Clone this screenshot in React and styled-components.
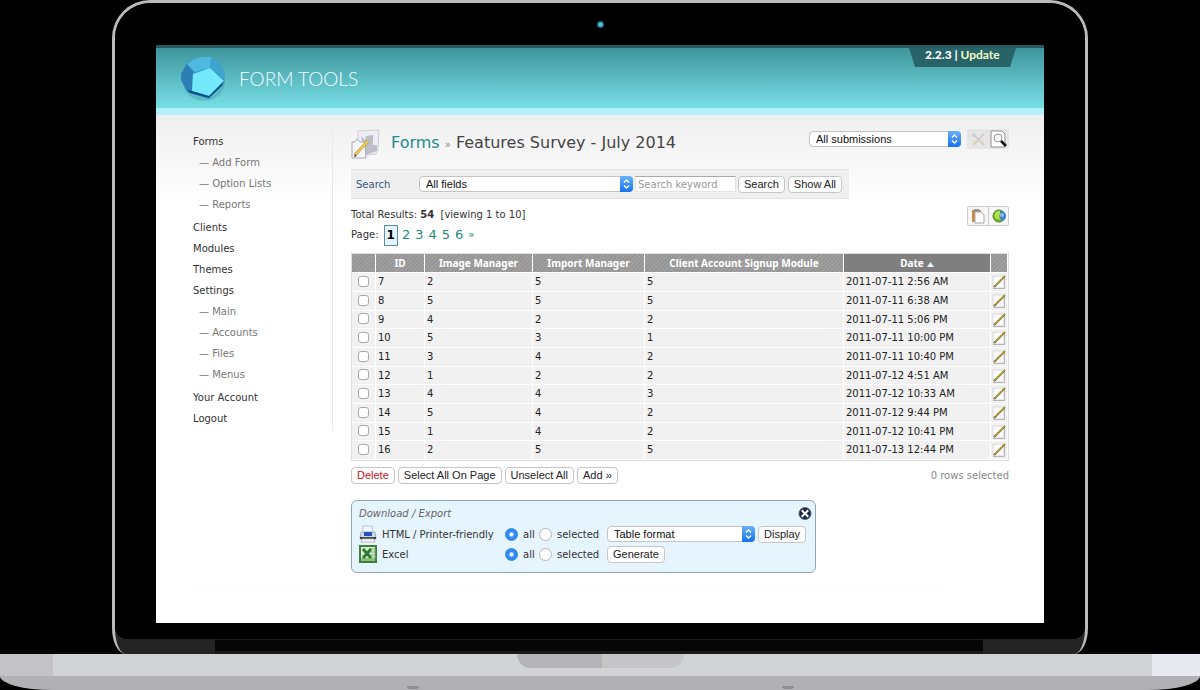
import React, { useState } from 'react';
import styled, { createGlobalStyle, css } from 'styled-components';

const sans = '"DejaVu Sans", Verdana, sans-serif';
const control = '"Liberation Sans", Arial, sans-serif';

const GlobalStyle = createGlobalStyle`
  * {
    box-sizing: border-box;
  }

  body {
    margin: 0;
    background: #000;
    color: #333;
    font-family: ${sans};
    font-size: 10px;
  }

  a {
    text-decoration: none;
  }
`;

/* ---------- laptop ---------- */

const Laptop = styled.div`
  display: flex;
  flex-direction: column;
  min-height: 100vh;
  overflow: hidden;
`;

const Lid = styled.div`
  flex: 1;
  display: flex;
  flex-direction: column;
  margin: 0 112px;
  border: 3px solid #b9babc;
  border-bottom: none;
  border-radius: 38px 38px 14px 14px / 38px 38px 26px 26px;
  background: #242424;
  overflow: hidden;
`;

const Bezel = styled.div`
  flex: 1;
  display: flex;
  flex-direction: column;
  padding: 0 41px 16px;
  border-radius: 0 0 12px 12px;
  background: #000;
`;

const CameraRow = styled.div`
  display: flex;
  justify-content: center;
  align-items: center;
  height: 42px;
`;

const Camera = styled.span`
  width: 7px;
  height: 7px;
  border-radius: 50%;
  background: radial-gradient(#5fc6e0 20%, #1b6f86 60%, #0a2a33);
`;

const Hinge = styled.div`
  height: 15px;
  margin: 0 102px 0 100px;
  border-top: 1px solid #1c1c1c;
  border-bottom: 3px solid #1a1a1a;
  background: #060606;
`;

const Deck = styled.div`
  display: flex;
  justify-content: space-between;
  height: 22px;
  background: #d1d3d4;
`;

const DeckEnd = styled.div`
  width: ${({ $width }) => $width};
  background: ${({ $color }) => $color};
`;

const Notch = styled.div`
  width: 167px;
  height: 14px;
  margin-right: 4px;
  border-radius: 0 0 14px 14px;
  background: linear-gradient(90deg, #b4b3b7 51%, #c5c5c7 51%);
`;

const Underside = styled.div`
  display: flex;
  justify-content: space-around;
  align-items: flex-end;
  height: 14px;
  padding: 0 225px;
  border-radius: 0 0 52px 52px / 0 0 14px 14px;
  background: #b1b0b5;
`;

const Foot = styled.span`
  width: 12px;
  height: 3px;
  margin-bottom: 1px;
  border-radius: 0 0 6px 6px;
  background: #8f8e93;
`;

/* ---------- application ---------- */

const Screen = styled.div`
  flex: 1;
  background: #fff linear-gradient(#efefef, #fff) 0 70px / 100% 90px no-repeat;
`;

const Header = styled.header`
  display: flex;
  justify-content: space-between;
  align-items: flex-start;
  height: 70px;
  padding: 0 28px 0 23px;
  border-top: 3px solid #28595d;
  border-bottom: 7px solid #b5f1fa;
  background: linear-gradient(#3f959c, #78dfe7);
`;

const Brand = styled.a`
  display: flex;
  align-items: center;
  gap: 12px;
  padding-top: 6px;
  color: #f4feff;
  font-family: Lato, sans-serif;
  font-size: 19px;
  font-weight: 300;
`;

const Version = styled.div`
  width: 107px;
  padding: 0 0 5px 16px;
  background: #28636a;
  clip-path: polygon(0 0, 100% 0, calc(100% - 6px) 100%, 6px 100%);
  color: #fff;
  font-family: Lato, sans-serif;
  font-size: 12px;
  font-weight: 900;
  line-height: 14px;
  white-space: nowrap;

  a {
    color: #f3fbc4;
    font-weight: 700;
  }
`;

const Body = styled.div`
  display: flex;
  padding: 12px 35px 0 37px;
`;

const Sidebar = styled.nav`
  flex: none;
  width: 140px;
  height: 304px;
  padding-top: 4px;
  border-right: 1px solid #e9e9e9;
`;

const Menu = styled.ul`
  margin: 0;
  padding: 0;
  list-style: none;
  line-height: 21px;

  a {
    color: #333;
  }
`;

const SubMenu = styled(Menu)`
  padding: 0 0 2px 6px;

  a {
    color: #777;
  }
`;

const Main = styled.main`
  flex: 1;
  min-width: 0;
  padding-left: 18px;
`;

const TitleRow = styled.div`
  display: flex;
  align-items: flex-start;
  height: 42px;
  padding-top: 2px;
`;

const Title = styled.h1`
  flex: 1;
  margin: 0 0 0 10px;
  color: #444;
  font-size: 16px;
  font-weight: 400;
  line-height: 28px;
  white-space: nowrap;

  a {
    color: #258a8a;
  }

  small {
    color: #888;
    font-size: 10px;
  }
`;

const ViewTools = styled.div`
  display: flex;
  align-items: center;
  gap: 6px;
`;

const SelectBox = styled.span`
  position: relative;
  display: flex;
  flex: none;
  width: ${({ $width }) => $width};

  select {
    width: 100%;
    height: 16px;
    padding: 0 18px 0 6px;
    border: 1px solid #c4c4c4;
    border-radius: 4px;
    appearance: none;
    background: #fff;
    color: #111;
    font-family: ${control};
    font-size: 11px;
    line-height: 14px;
  }

  svg {
    position: absolute;
    top: 0;
    right: 0;
    pointer-events: none;
  }
`;

const Button = styled.button`
  flex: none;
  height: 17px;
  padding: 0 5px;
  border: 1px solid #c6c6c6;
  border-radius: 4px;
  background: #fff;
  color: ${({ $danger }) => ($danger ? '#c4161c' : '#222')};
  font-family: ${control};
  font-size: 11px;
  line-height: 15px;
  white-space: nowrap;
`;

const IconButton = styled.button`
  display: flex;
  justify-content: center;
  align-items: center;
  width: 20px;
  height: 18px;
  padding: 0;
  border: none;
  background: none;
  opacity: ${({ disabled }) => (disabled ? 0.35 : 1)};
`;

const IconGroup = styled.div`
  display: flex;
  flex: none;
  align-self: flex-start;
  ${({ $flat }) =>
    $flat
      ? css`
          padding: 1px;
          background: #e6e6e6;
        `
      : css`
          border: 1px solid #ccc;
          border-radius: 2px;
          background: #f6f6f6;

          button + button {
            border-left: 1px solid #ccc;
          }
        `}
`;

const SearchForm = styled.form`
  display: flex;
  align-items: center;
  width: 498px;
  height: 30px;
  padding: 0 5px;
  border: 1px solid #e2e2e2;
  border-width: 1px 0;
  background: #efefef;

  label {
    flex: none;
    width: 63px;
    color: #36587c;
  }

  input {
    flex: none;
    width: 101px;
    height: 16px;
    margin: 0 2px;
    padding: 0 2px;
    border: 1px solid #e4e4e4;
    border-top-color: #aaa;
    background: #fff;
    font-family: ${sans};
    font-size: 10px;
  }

  input::placeholder {
    color: #999;
  }

  button + button {
    margin-left: 3px;
  }
`;

const Summary = styled.div`
  display: flex;
  justify-content: space-between;
  height: 54px;
  padding-top: 7px;
  line-height: 18px;

  p {
    margin: 0;
  }
`;

const Pages = styled.div`
  display: flex;
  align-items: center;
  gap: 5px;
  height: 22px;

  a {
    color: #258a7c;
    font-size: 13px;
  }

  a:last-child {
    font-size: 10px;
  }

  strong {
    margin-right: -1px;
    padding: 0 2px;
    border: 1px solid #5d8ca8;
    background: #e6f4fd;
    color: #000;
    font-size: 12px;
    line-height: 19px;
  }
`;

const Table = styled.table`
  width: 100%;
  border: 1px solid #ddd;
  border-collapse: separate;
  border-spacing: 0;
  table-layout: fixed;
`;

const Th = styled.th`
  height: 19px;
  padding: 0;
  border: solid #fff;
  border-width: 0 1px 1px 0;
  background: ${({ $sorted }) =>
    $sorted ? '#7f7f7f' : 'repeating-linear-gradient(135deg, #949494 0 1px, #a1a1a1 2px 3px)'};
  color: #fff;
  font-family: "Noto Sans", sans-serif;
  font-size: 10px;
  line-height: 12px;

  svg {
    margin-left: 3px;
  }
`;

const Tr = styled.tr`
  height: 19px;

  &:nth-child(3n) {
    height: 18px;
  }
`;

const Td = styled.td`
  padding: 0 0 0 2px;
  border: solid #fff;
  border-width: 0 1px 1px 0;
  background: #f1f1f1;
  color: #222;
  line-height: 12px;

  &:last-child {
    padding: 0;
  }

  button {
    width: 16px;
    height: 16px;
  }
`;

const Checkbox = styled.input`
  display: block;
  width: 11px;
  height: 11px;
  margin: 0 0 2px 4px;
  border: 1px solid #aaa;
  border-radius: 3px;
  appearance: none;
  background: #fff;

  &:checked {
    background: #3b99fc;
  }
`;

const Actions = styled.div`
  display: flex;
  align-items: center;
  gap: 3px;
  padding-top: 6px;
`;

const Selected = styled.span`
  margin-left: auto;
  color: #888;
`;

const Export = styled.section`
  width: 465px;
  height: 73px;
  margin-top: 16px;
  padding: 3px 7px 0;
  border: 1px solid #8fa5b3;
  border-radius: 6px;
  background: #e6f4fe;
`;

const ExportTitle = styled.div`
  display: flex;
  justify-content: space-between;
  align-items: center;
  height: 19px;

  h2 {
    margin: 0;
    color: #666;
    font-size: 10px;
    font-style: italic;
    font-weight: 400;
  }

  button {
    width: 14px;
    margin-right: -4px;
  }
`;

const ExportRow = styled.div`
  display: flex;
  align-items: center;
  height: 20px;
  margin-top: ${({ $first }) => ($first ? '1px' : '0')};

  button {
    margin-left: ${({ $first }) => ($first ? '3px' : '0')};
  }
`;

const ExportName = styled.span`
  flex: none;
  width: 123px;
  margin-left: 5px;
  white-space: nowrap;
`;

const Choice = styled.label`
  display: flex;
  flex: none;
  align-items: center;
  gap: 5px;
  width: ${({ $width }) => $width};
`;

const Radio = styled.input`
  width: 13px;
  height: 13px;
  margin: 0;
  border: 1px solid #b5b5b5;
  border-radius: 50%;
  appearance: none;
  background: #fff;

  &:checked {
    border-color: #2f86e8;
    background: radial-gradient(#fff 1px, #2f8bf0 3px);
  }
`;

const Rule = styled.hr`
  height: 1px;
  margin: 16px 64px 0 -158px;
  border: none;
  background: #fafafa;
`;

/* ---------- drawings ---------- */

const LogoMark = () => (
  <svg width="48" height="48" viewBox="0 0 48 48">
    <ellipse cx="25" cy="27" rx="21" ry="20" fill="#20737c" opacity=".22" />
    <path d="M15 5 23 3h9l9 6 5 11v6L30 45 8 38 2 26v-6l6-11z" fill="#3793c4" />
    <path d="M15 5 23 3h9l-1 11-15 4-8-8z" fill="#4fb9e2" />
    <path d="m32 3 9 6 5 11v6l-15-12z" fill="#3fa5ce" />
    <path d="m8 10 6 8-1 19-5-1-6-10v-6z" fill="#2c7fb4" />
    <path d="m14 20 17-6 14 13-15 15-17-5z" fill="#73e9fb" />
    <path d="m8 36 5 1 17 5 15-15-2 5-13 12-19-5z" fill="#0b5090" />
  </svg>
);

const Stepper = () => (
  <svg width="13" height="16" viewBox="0 0 13 16">
    <defs>
      <linearGradient id="step" x2="0" y2="1">
        <stop stopColor="#6bb1fa" />
        <stop offset="1" stopColor="#1672f0" />
      </linearGradient>
    </defs>
    <path d="M0 0h9a4 4 0 0 1 4 4v8a4 4 0 0 1-4 4H0z" fill="url(#step)" />
    <path d="M4 6.5 6.5 4 9 6.500M4 9.500 6.500 12 9 9.500" fill="none" stroke="#fff" strokeWidth="1.300" />
  </svg>
);

const FormIcon = () => (
  <svg width="30" height="31" viewBox="0 0 30 31">
    <path d="M7 2 28 1l-1 20-2 4-18 2z" fill="#ededf2" stroke="#cfcfd6" />
    <path d="m10 7 4 4 1-4 7-1v10h4v6l-12 4z" fill="#bdbdc9" />
    <path d="M1 13h3l2-3 3 3h5l1 16H1z" fill="#f7f7fa" stroke="#a9a9b5" />
    <path d="m4 26 13-14" stroke="#a58a3c" strokeWidth="3" />
    <path d="m4 26 13-14" stroke="#f2cc4c" strokeWidth="2" />
    <path d="m3 28 1-3 2 2z" fill="#444" />
  </svg>
);

const EditIcon = () => (
  <svg width="16" height="16" viewBox="0 0 16 16">
    <path d="M2 2h11v12H2z" fill="#fafafa" stroke="#d8d8d8" />
    <path d="M2 14.500h11.500V4" fill="none" stroke="#b5b5b5" />
    <path d="m3 13 11-11" stroke="#7d702c" strokeWidth="1.800" />
    <path d="m4 11.500 9.500-9.500" stroke="#dcc94a" strokeWidth="1" />
  </svg>
);

const ToolsIcon = () => (
  <svg width="17" height="17" viewBox="0 0 17 17">
    <path d="m3 3 11 11M14 3 4 13" stroke="#999" strokeWidth="1.500" />
    <path d="m10 10 4 4M3 14l4-4" stroke="#c5ad57" strokeWidth="2" />
    <path d="m2 5 2-3 2 2-2 2z" fill="#999" />
  </svg>
);

const PreviewIcon = () => (
  <svg width="18" height="18" viewBox="0 0 18 18">
    <path d="M2 1h11l3 3v13H2z" fill="#fff" stroke="#909090" />
    <circle cx="9" cy="8" r="4" fill="#f2f5f7" stroke="#999" />
    <path d="m12 11 5 5" stroke="#111" strokeWidth="2.500" />
  </svg>
);

const PasteIcon = () => (
  <svg width="16" height="16" viewBox="0 0 16 16">
    <path d="M2 2h9v12H2z" fill="#c28d4a" />
    <path d="M4 1h5v2H4z" fill="#8f9299" />
    <path d="M5 4h6l3 3v8H5z" fill="#fff" stroke="#a8a8a8" />
  </svg>
);

const GlobeIcon = () => (
  <svg width="16" height="16" viewBox="0 0 16 16">
    <circle cx="8" cy="8" r="6" fill="#6fb52e" stroke="#47851f" />
    <path d="M4 10a5 5 0 0 1 6-7l-2 5 1 4z" fill="#b4dc50" />
    <path d="M9 3a5 5 0 0 1 2 10l-2-3z" fill="#3f7fd0" />
    <circle cx="11" cy="7" r="2" fill="#8fc4f2" />
  </svg>
);

const CloseIcon = () => (
  <svg width="15" height="15" viewBox="0 0 15 15">
    <circle cx="7.500" cy="7.500" r="6.500" fill="#1c2947" stroke="#5c6c8b" />
    <path d="m4 4 7 7m0-7-7 7" stroke="#fff" strokeWidth="2" />
  </svg>
);

const PrinterIcon = () => (
  <svg width="18" height="18" viewBox="0 0 18 18">
    <path d="M4 1h9l1 7H4z" fill="#f2f7ff" stroke="#b8c6dc" />
    <path d="M2 7h14l1 7H1z" fill="#d3d9e4" stroke="#a3adbd" />
    <path d="M5 7h8v4H5z" fill="#2452ba" />
    <path d="M1 12h16v2H1z" fill="#3a3f4a" />
    <path d="M3 14h12l1 3H2z" fill="#fff" stroke="#b5b5b5" />
  </svg>
);

const ExcelIcon = () => (
  <svg width="18" height="18" viewBox="0 0 18 18">
    <path d="M1 1h16v16H1z" fill="#dcebd5" stroke="#3f7f3c" strokeWidth="2" />
    <path d="M11 4h5v9h-5M11 7h5M11 10h5" fill="none" stroke="#7fae73" />
    <path d="M2 13h14v3H2z" fill="#8dc07f" />
    <path d="m4 4 8 9M12 4l-8 9" stroke="#2e7d32" strokeWidth="3" />
  </svg>
);

/* ---------- data ---------- */

const menu = [
  { name: 'Forms', items: ['Add Form', 'Option Lists', 'Reports'] },
  { name: 'Clients' },
  { name: 'Modules' },
  { name: 'Themes' },
  { name: 'Settings', items: ['Main', 'Accounts', 'Files', 'Menus'] },
  { name: 'Your Account' },
  { name: 'Logout' },
];

const rows = [
  [7, 2, 5, 5, '2011-07-11 2:56 AM'],
  [8, 5, 5, 5, '2011-07-11 6:38 AM'],
  [9, 4, 2, 2, '2011-07-11 5:06 PM'],
  [10, 5, 3, 1, '2011-07-11 10:00 PM'],
  [11, 3, 4, 2, '2011-07-11 10:40 PM'],
  [12, 1, 2, 2, '2011-07-12 4:51 AM'],
  [13, 4, 4, 3, '2011-07-12 10:33 AM'],
  [14, 5, 4, 2, '2011-07-12 9:44 PM'],
  [15, 1, 4, 2, '2011-07-12 10:41 PM'],
  [16, 2, 5, 5, '2011-07-13 12:44 PM'],
];

const Select = ({ label, width, option }) => (
  <SelectBox $width={width}>
    <select aria-label={label}>
      <option>{option}</option>
    </select>
    <Stepper />
  </SelectBox>
);

const Scope = ({ name }) => (
  <>
    <Choice $width="34px">
      <Radio type="radio" name={name} defaultChecked />
      all
    </Choice>
    <Choice $width="68px">
      <Radio type="radio" name={name} />
      selected
    </Choice>
  </>
);

const Navigation = () => (
  <Sidebar>
    <Menu>
      {menu.map(({ name, items }) => (
        <li key={name}>
          <a href="#">{name}</a>
          {items && (
            <SubMenu>
              {items.map((item) => (
                <li key={item}>
                  <a href="#">— {item}</a>
                </li>
              ))}
            </SubMenu>
          )}
        </li>
      ))}
    </Menu>
  </Sidebar>
);

const Submissions = ({ checked, onToggle }) => (
  <Table>
    <colgroup>
      <col width="24" />
      <col width="49" />
      <col width="108" />
      <col width="112" />
      <col />
      <col width="147" />
      <col width="17" />
    </colgroup>
    <thead>
      <tr>
        <Th />
        <Th>ID</Th>
        <Th>Image Manager</Th>
        <Th>Import Manager</Th>
        <Th>Client Account Signup Module</Th>
        <Th $sorted>
          Date
          <svg width="7" height="5" viewBox="0 0 7 5">
            <path d="M0 5 3.500 0 7 5z" fill="#e4f4f8" />
          </svg>
        </Th>
        <Th />
      </tr>
    </thead>
    <tbody>
      {rows.map(([id, ...values]) => (
        <Tr key={id}>
          <Td>
            <Checkbox
              type="checkbox"
              aria-label={`Select ${id}`}
              checked={checked.includes(id)}
              onChange={() => onToggle(id)}
            />
          </Td>
          <Td>{id}</Td>
          {values.map((value, i) => (
            <Td key={i}>{value}</Td>
          ))}
          <Td>
            <IconButton aria-label={`Edit ${id}`}>
              <EditIcon />
            </IconButton>
          </Td>
        </Tr>
      ))}
    </tbody>
  </Table>
);

const App = () => {
  const [checked, setChecked] = useState([]);

  const onToggle = (id) => {
    setChecked(checked.includes(id) ? checked.filter((c) => c !== id) : [...checked, id]);
  };

  return (
    <Laptop>
      <GlobalStyle />
      <Lid>
        <Bezel>
          <CameraRow>
            <Camera />
          </CameraRow>
          <Screen>
            <Header>
              <Brand href="#">
                <LogoMark />
                FORM TOOLS
              </Brand>
              <Version>
                2.2.3 | <a href="#">Update</a>
              </Version>
            </Header>
            <Body>
              <Navigation />
              <Main>
                <TitleRow>
                  <FormIcon />
                  <Title>
                    <a href="#">Forms</a> <small>»</small> Features Survey - July 2014
                  </Title>
                  <ViewTools>
                    <Select label="View" width="152px" option="All submissions" />
                    <IconGroup $flat>
                      <IconButton disabled aria-label="Edit view">
                        <ToolsIcon />
                      </IconButton>
                      <IconButton aria-label="Preview">
                        <PreviewIcon />
                      </IconButton>
                    </IconGroup>
                  </ViewTools>
                </TitleRow>
                <SearchForm onSubmit={(e) => e.preventDefault()}>
                  <label htmlFor="keyword">Search</label>
                  <Select label="Field" width="214px" option="All fields" />
                  <input id="keyword" type="text" placeholder="Search keyword" />
                  <Button type="submit">Search</Button>
                  <Button type="button">Show All</Button>
                </SearchForm>
                <Summary>
                  <div>
                    <p>
                      Total Results: <b>54</b> &nbsp;[viewing 1 to 10]
                    </p>
                    <Pages>
                      Page: <strong>1</strong>
                      {[2, 3, 4, 5, 6, '»'].map((page) => (
                        <a href="#" key={page}>
                          {page}
                        </a>
                      ))}
                    </Pages>
                  </div>
                  <IconGroup>
                    <IconButton aria-label="Copy">
                      <PasteIcon />
                    </IconButton>
                    <IconButton aria-label="Publish">
                      <GlobeIcon />
                    </IconButton>
                  </IconGroup>
                </Summary>
                <Submissions checked={checked} onToggle={onToggle} />
                <Actions>
                  <Button $danger>Delete</Button>
                  <Button onClick={() => setChecked(rows.map(([id]) => id))}>Select All On Page</Button>
                  <Button onClick={() => setChecked([])}>Unselect All</Button>
                  <Button>Add »</Button>
                  <Selected>{checked.length} rows selected</Selected>
                </Actions>
                <Export>
                  <ExportTitle>
                    <h2>Download / Export</h2>
                    <IconButton aria-label="Close">
                      <CloseIcon />
                    </IconButton>
                  </ExportTitle>
                  <ExportRow $first>
                    <PrinterIcon />
                    <ExportName>HTML / Printer-friendly</ExportName>
                    <Scope name="html" />
                    <Select label="Format" width="148px" option="Table format" />
                    <Button>Display</Button>
                  </ExportRow>
                  <ExportRow>
                    <ExcelIcon />
                    <ExportName>Excel</ExportName>
                    <Scope name="excel" />
                    <Button>Generate</Button>
                  </ExportRow>
                </Export>
                <Rule />
              </Main>
            </Body>
          </Screen>
        </Bezel>
        <Hinge />
      </Lid>
      <Deck>
        <DeckEnd $width="53px" $color="#c3c3c5" />
        <Notch />
        <DeckEnd $width="48px" $color="#e8e9ee" />
      </Deck>
      <Underside>
        <Foot />
        <Foot />
      </Underside>
    </Laptop>
  );
};

export default App;
